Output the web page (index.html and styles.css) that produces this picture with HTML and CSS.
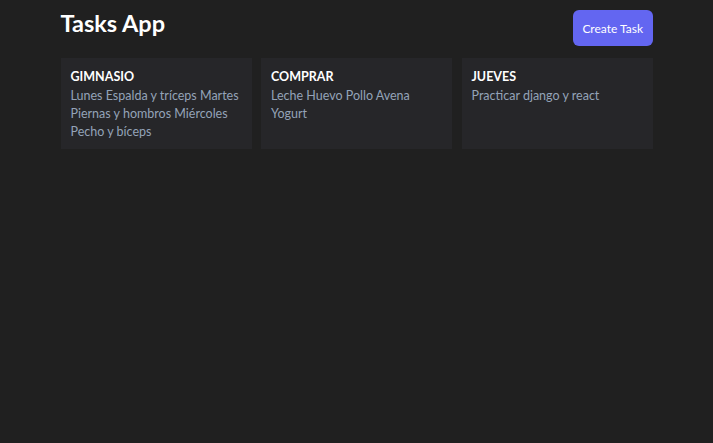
FILE: index.html
```html
<!DOCTYPE html>
<html lang="es">
<head>
<meta charset="utf-8">
<title>Tasks App</title>
<link rel="stylesheet" href="styles.css">
</head>
<body>
<div class="container">
  <header class="header">
    <h1 class="title">Tasks App</h1>
    <button class="btn">Create Task</button>
  </header>
  <div class="grid">
    <div class="card">
      <h2 class="card-title">Gimnasio</h2>
      <p class="card-desc">Lunes Espalda y tríceps Martes Piernas y hombros Miércoles Pecho y bíceps</p>
    </div>
    <div class="card">
      <h2 class="card-title">Comprar</h2>
      <p class="card-desc">Leche Huevo Pollo Avena Yogurt</p>
    </div>
    <div class="card">
      <h2 class="card-title">Jueves</h2>
      <p class="card-desc">Practicar django y react</p>
    </div>
  </div>
</div>
</body>
</html>
```
FILE: styles.css
```css
html, body {
  margin: 0;
  padding: 0;
  background: #202020;
  height: 100%;
}
body {
  font-family: Lato, "Noto Sans", sans-serif;
  color: #ffffff;
}
.container {
  max-width: 592px;
  margin: 0 auto;
  padding: 10px 0 0;
}
.header {
  display: flex;
  justify-content: space-between;
  align-items: flex-start;
  height: 36px;
}
.title {
  margin: 0;
  font-size: 23.5px;
  line-height: 27px;
  font-weight: 700;
}
.btn {
  height: 36px;
  padding: 0 9.5px;
  border: none;
  border-radius: 6px;
  background: #6366f1;
  color: #ffffff;
  font-family: inherit;
  font-size: 12px;
}
.grid {
  display: grid;
  grid-template-columns: repeat(3, 1fr);
  gap: 9.5px;
  margin-top: 12px;
}
.card {
  background: #262629;
  padding: 9px 10px 8px;
  min-height: 74px;
}
.card-title {
  margin: 0;
  font-size: 12.5px;
  line-height: 20px;
  font-weight: 700;
  text-transform: uppercase;
}
.card-desc {
  margin: 0;
  font-size: 12.5px;
  line-height: 18px;
  color: #94a3b8;
}
```
